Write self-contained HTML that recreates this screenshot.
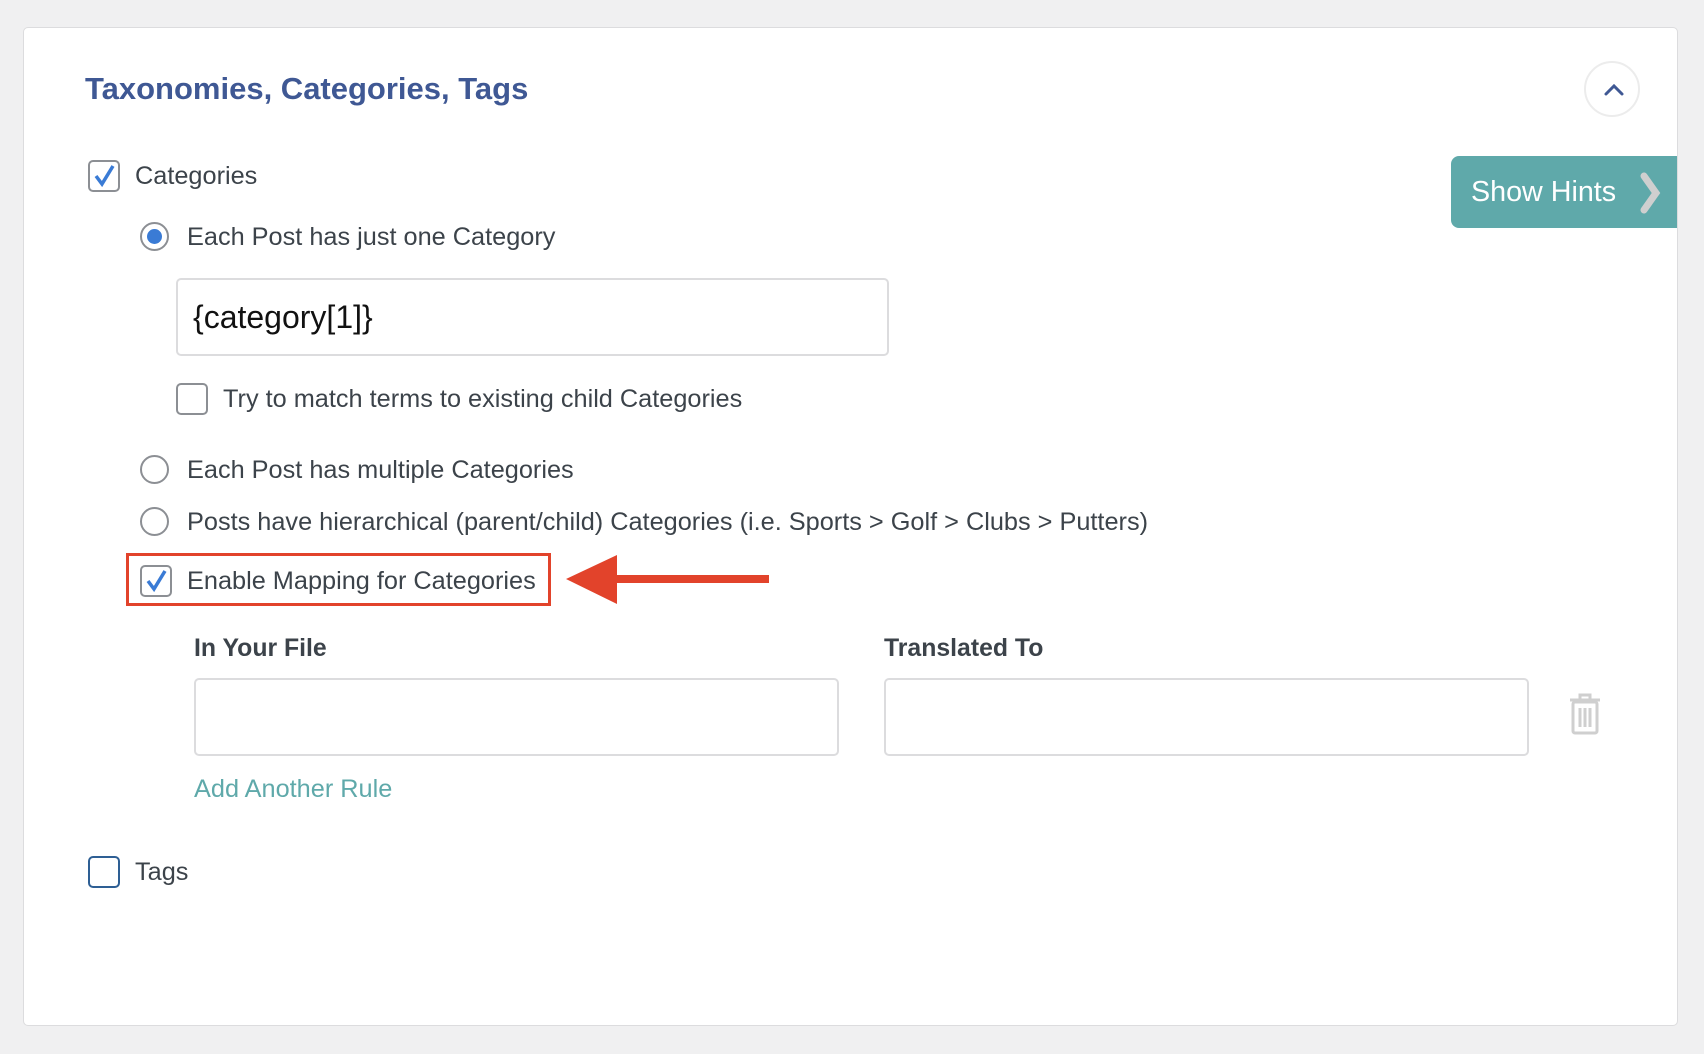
<!DOCTYPE html>
<html><head><meta charset="utf-8"><style>
body{margin:0;width:1704px;height:1054px;background:#f0f0f1;font-family:"Liberation Sans",sans-serif;color:#3c434a;position:relative;overflow:hidden}
.card{position:absolute;left:23px;top:27px;width:1653px;height:997px;background:#fff;border:1px solid #dcdcde;border-radius:5px}
.a{position:absolute}
.t{position:absolute;font-size:25.3px;white-space:nowrap;line-height:1}
.cb{position:absolute;width:28px;height:28px;border:2px solid #8c8f94;border-radius:5px;background:#fff}
.rd{position:absolute;width:29px;height:29px;border:2px solid #8c8f94;border-radius:50%;background:#fff;box-sizing:border-box}
.inp{position:absolute;border:2px solid #dcdcde;border-radius:5px;background:#fff;box-sizing:border-box}
</style></head><body>
<div class="card"></div>
<div class="t" style="left:85px;top:73px;font-size:31px;font-weight:bold;color:#3f5894">Taxonomies, Categories, Tags</div>
<div class="a" style="left:1584px;top:61px;width:56px;height:56px;border:2px solid #ececec;border-radius:50%;box-sizing:border-box"></div>
<svg class="a" style="left:1600px;top:78px" width="28" height="24"><path d="M6 16 L14 8 L22 16" stroke="#3f5894" stroke-width="3" fill="none" stroke-linecap="round"/></svg>
<div class="a" style="left:1451px;top:156px;width:226px;height:72px;background:#5fa9aa;border-radius:8px 0 0 8px"></div>
<div class="t" style="left:1471px;top:178px;font-size:28.7px;color:#fff">Show Hints</div>
<svg class="a" style="left:1636px;top:170px" width="34" height="46"><path d="M8 6 L20 23 L8 40" stroke="#cfcfcf" stroke-width="7" fill="none" stroke-linecap="round"/></svg>

<div class="cb" style="left:88px;top:160px"></div>
<svg class="a" style="left:88px;top:160px" width="32" height="32"><path d="M8 16 L14 24 L25 6" stroke="#3a7bd5" stroke-width="3.5" fill="none"/></svg>
<div class="t" style="left:135px;top:164px">Categories</div>

<div class="rd" style="left:140px;top:222px"></div>
<div class="a" style="left:147px;top:229px;width:15px;height:15px;border-radius:50%;background:#3a7bd5"></div>
<div class="t" style="left:187px;top:225px">Each Post has just one Category</div>

<div class="inp" style="left:176px;top:278px;width:713px;height:78px"></div>
<div class="t" style="left:193px;top:301px;font-size:32px;color:#111">{category[1]}</div>

<div class="cb" style="left:176px;top:383px"></div>
<div class="t" style="left:223px;top:387px">Try to match terms to existing child Categories</div>

<div class="rd" style="left:140px;top:455px"></div>
<div class="t" style="left:187px;top:458px">Each Post has multiple Categories</div>
<div class="rd" style="left:140px;top:507px"></div>
<div class="t" style="left:187px;top:510px">Posts have hierarchical (parent/child) Categories (i.e. Sports &gt; Golf &gt; Clubs &gt; Putters)</div>

<div class="a" style="left:126px;top:553px;width:419px;height:47px;border:3px solid #e2432b"></div>
<div class="cb" style="left:140px;top:565px"></div>
<svg class="a" style="left:140px;top:565px" width="32" height="32"><path d="M8 16 L14 24 L25 6" stroke="#3a7bd5" stroke-width="3.5" fill="none"/></svg>
<div class="t" style="left:187px;top:569px">Enable Mapping for Categories</div>
<svg class="a" style="left:560px;top:550px" width="215" height="60"><path d="M6 29 L57 5 L57 25 L209 25 L209 33 L57 33 L57 54 Z" fill="#e2432b"/></svg>

<div class="t" style="left:194px;top:637px;font-weight:bold;font-size:24.8px">In Your File</div>
<div class="t" style="left:884px;top:637px;font-weight:bold;font-size:24.8px">Translated To</div>
<div class="inp" style="left:194px;top:678px;width:645px;height:78px"></div>
<div class="inp" style="left:884px;top:678px;width:645px;height:78px"></div>
<svg class="a" style="left:1566px;top:692px" width="38" height="44"><g stroke="#cfcfcf" stroke-width="3" fill="none"><path d="M4 8 H34 M14 8 V3 H24 V8"/><rect x="7" y="10" width="24" height="31" rx="2"/><path d="M14 16 V35 M19 16 V35 M24 16 V35"/></g></svg>
<div class="t" style="left:194px;top:777px;color:#5fa9aa">Add Another Rule</div>

<div class="cb" style="left:88px;top:856px;border-color:#2e5f94"></div>
<div class="t" style="left:135px;top:860px">Tags</div>
</body></html>
